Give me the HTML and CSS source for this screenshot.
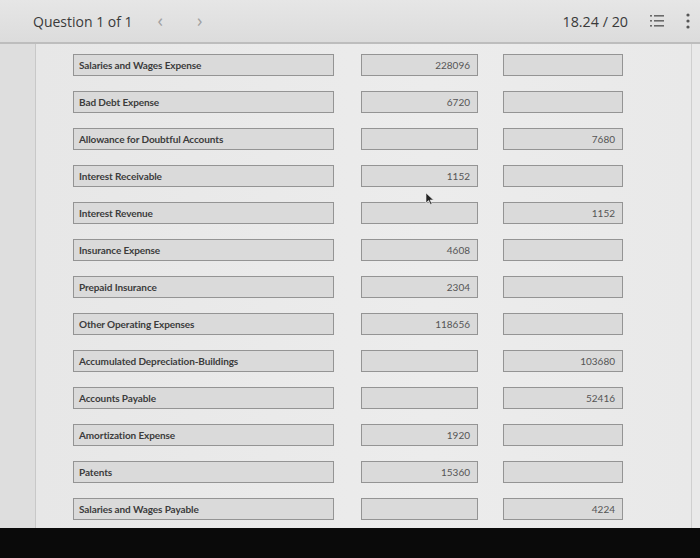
FILE: index.html
```html
<!DOCTYPE html>
<html>
<head>
<meta charset="utf-8">
<link rel="stylesheet" href="styles.css">
</head>
<body>
<div class="screen">
  <header class="topbar">
    <div class="title">Question 1 of 1</div>
    <div class="nav"><span class="chev">&lsaquo;</span><span class="chev">&rsaquo;</span></div>
    <div class="spacer"></div>
    <div class="score">18.24 / 20</div>
    <svg class="listicon" width="14" height="14" viewBox="0 0 14 14">
      <g fill="#6a6a6a">
        <rect x="0" y="1" width="2" height="1.6"/><rect x="4" y="1" width="10" height="1.6"/>
        <rect x="0" y="6" width="2" height="1.6"/><rect x="4" y="6" width="10" height="1.6"/>
        <rect x="0" y="11" width="2" height="1.6"/><rect x="4" y="11" width="10" height="1.6"/>
      </g>
    </svg>
    <svg class="kebab" width="4" height="16" viewBox="0 0 4 16">
      <g fill="#555"><circle cx="2" cy="2" r="1.6"/><circle cx="2" cy="8" r="1.6"/><circle cx="2" cy="14" r="1.6"/></g>
    </svg>
  </header>
  <main class="main">
    <div class="gutter"></div>
    <div class="content">
      <div class="row"><div class="box label">Salaries and Wages Expense</div><div class="box num">228096</div><div class="box num2"></div></div>
      <div class="row"><div class="box label">Bad Debt Expense</div><div class="box num">6720</div><div class="box num2"></div></div>
      <div class="row"><div class="box label">Allowance for Doubtful Accounts</div><div class="box num"></div><div class="box num2">7680</div></div>
      <div class="row"><div class="box label">Interest Receivable</div><div class="box num">1152</div><div class="box num2"></div></div>
      <div class="row"><div class="box label">Interest Revenue</div><div class="box num"></div><div class="box num2">1152</div></div>
      <div class="row"><div class="box label">Insurance Expense</div><div class="box num">4608</div><div class="box num2"></div></div>
      <div class="row"><div class="box label">Prepaid Insurance</div><div class="box num">2304</div><div class="box num2"></div></div>
      <div class="row"><div class="box label">Other Operating Expenses</div><div class="box num">118656</div><div class="box num2"></div></div>
      <div class="row"><div class="box label">Accumulated Depreciation-Buildings</div><div class="box num"></div><div class="box num2">103680</div></div>
      <div class="row"><div class="box label">Accounts Payable</div><div class="box num"></div><div class="box num2">52416</div></div>
      <div class="row"><div class="box label">Amortization Expense</div><div class="box num">1920</div><div class="box num2"></div></div>
      <div class="row"><div class="box label">Patents</div><div class="box num">15360</div><div class="box num2"></div></div>
      <div class="row"><div class="box label">Salaries and Wages Payable</div><div class="box num"></div><div class="box num2">4224</div></div>
    </div>
    <svg class="cursor" width="9" height="13" viewBox="0 0 9 13">
      <path d="M1 1 L1 11 L3.5 8.5 L5.5 12.5 L7 11.8 L5 8 L8.5 8 Z" fill="#222" stroke="#eee" stroke-width="0.6"/>
    </svg>
  </main>
  <div class="bezel"></div>
</div>
</body>
</html>
```

FILE: styles.css
```css
* { box-sizing: border-box; }
html, body { margin: 0; padding: 0; }
body {
  width: 700px;
  height: 558px;
  overflow: hidden;
  background: #0a0a0a;
  font-family: Lato, "Liberation Sans", sans-serif;
}
.screen {
  width: 700px;
  height: 558px;
  display: flex;
  flex-direction: column;
}
.topbar {
  height: 44px;
  flex: none;
  display: flex;
  align-items: center;
  padding: 0 10px 0 33px;
  background: linear-gradient(#e6e6e6, #dcdcdc);
  border-bottom: 2px solid #bdbdbd;
}
.title {
  font-family: "Open Sans", "Liberation Sans", sans-serif;
  font-size: 14px;
  color: #3a3a3a;
}
.nav {
  display: flex;
  gap: 34px;
  margin-left: 25px;
  font-family: "Open Sans", sans-serif;
  font-size: 18px;
  color: #a0a0a0;
  line-height: 1;
  padding-bottom: 2px;
}
.spacer { flex: 1; }
.score {
  font-family: "Open Sans", "Liberation Sans", sans-serif;
  font-size: 14.3px;
  color: #3a3a3a;
  margin-right: 22px;
}
.listicon { margin-right: 22px; }
.kebab { margin-right: 0; }
.main {
  position: relative;
  height: 484px;
  flex: none;
  display: flex;
  background: #e9e9e9;
}
.gutter {
  width: 36px;
  flex: none;
  background: #dedede;
  border-right: 1px solid #c8c8c8;
}
.content {
  flex: 1;
  display: flex;
  flex-direction: column;
  gap: 15px;
  padding: 10px 0 0 37px;
  background: linear-gradient(90deg, #e7e7e7, #ececec 60%, #e9e9e9);
  border-right: 1px solid #cfcfcf;
  margin-right: 8px;
}
.row {
  display: flex;
  height: 22px;
}
.box {
  height: 22px;
  background: #dadada;
  border: 1.5px solid #949494;
  font-size: 10px;
  color: #3c3c3c;
  display: flex;
  align-items: center;
}
.label {
  width: 261px;
  padding-left: 5px;
  font-weight: 700;
  letter-spacing: -0.1px;
}
.num {
  width: 117px;
  margin-left: 27px;
  justify-content: flex-end;
  padding-right: 7px;
  color: #555;
}
.num2 {
  width: 120px;
  margin-left: 25px;
  justify-content: flex-end;
  padding-right: 7px;
  color: #555;
}
.cursor {
  position: absolute;
  left: 425px;
  top: 148px;
}
.bezel {
  flex: 1;
  background: #0a0a0a;
}
```
